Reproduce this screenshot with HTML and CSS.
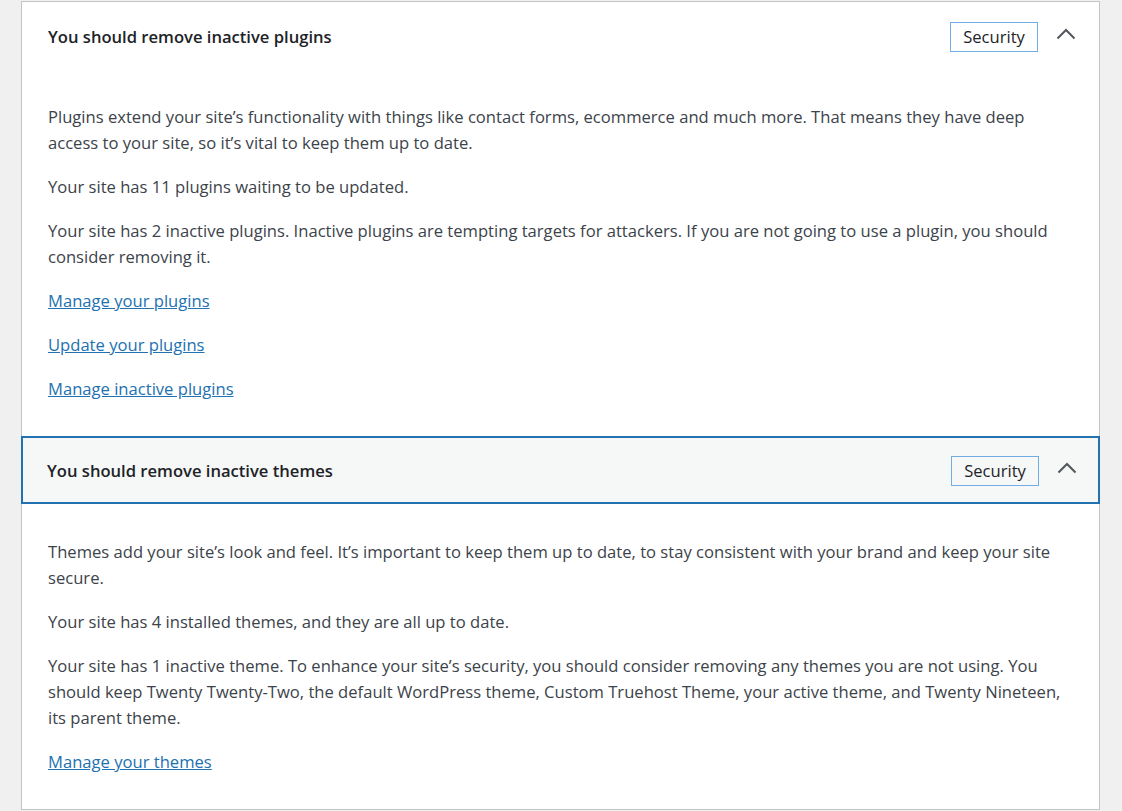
FILE: index.html
```html
<!DOCTYPE html>
<html lang="en">
<head>
<meta charset="utf-8">
<title>Site Health</title>
<link rel="stylesheet" href="styles.css">
</head>
<body>
<div class="accordion">
  <section class="item">
    <div class="trigger">
      <h3 class="title">You should remove inactive plugins</h3>
      <span class="badge">Security</span>
      <svg class="chev" width="20" height="12" viewBox="0 0 20 12"><path d="M1.5 10.5 L10 2 L18.5 10.5" fill="none" stroke="#50575e" stroke-width="2"/></svg>
    </div>
    <div class="panel">
      <p>Plugins extend your site’s functionality with things like contact forms, ecommerce and much more. That means they have deep access to your site, so it’s vital to keep them up to date.</p>
      <p>Your site has 11 plugins waiting to be updated.</p>
      <p>Your site has 2 inactive plugins. Inactive plugins are tempting targets for attackers. If you are not going to use a plugin, you should consider removing it.</p>
      <p><a href="#">Manage your plugins</a></p>
      <p><a href="#">Update your plugins</a></p>
      <p><a href="#">Manage inactive plugins</a></p>
    </div>
  </section>
  <section class="item">
    <div class="trigger focused">
      <h3 class="title">You should remove inactive themes</h3>
      <span class="badge">Security</span>
      <svg class="chev" width="20" height="12" viewBox="0 0 20 12"><path d="M1.5 10.5 L10 2 L18.5 10.5" fill="none" stroke="#50575e" stroke-width="2"/></svg>
    </div>
    <div class="panel">
      <p>Themes add your site’s look and feel. It’s important to keep them up to date, to stay consistent with your brand and keep your site secure.</p>
      <p>Your site has 4 installed themes, and they are all up to date.</p>
      <p>Your site has 1 inactive theme. To enhance your site’s security, you should consider removing any themes you are not using. You should keep Twenty Twenty-Two, the default WordPress theme, Custom Truehost Theme, your active theme, and Twenty Nineteen, its parent theme.</p>
      <p><a href="#">Manage your themes</a></p>
    </div>
  </section>
</div>
</body>
</html>
```
FILE: styles.css
```css
html, body {
  margin: 0;
  padding: 0;
  background: #f0f0f1;
}
body {
  padding-top: 1px;
  font-family: "Segoe UI", "Open Sans", "Noto Sans", sans-serif;
  color: #3c434a;
}
.accordion {
  margin-left: 21px;
  width: 1077px;
  background: #fff;
  border: 1px solid #c3c4c7;
}
.trigger {
  display: flex;
  align-items: center;
  height: 64px;
  padding: 0 21px 0 24px;
  border: 2px solid transparent;
}
.trigger.focused {
  height: 64px;
  margin: 0 -1px;
  background: #f6f7f7;
  border-color: #2271b1;
}
.title {
  flex: 1;
  margin: 1px 0 0;
  font-size: 16.6px;
  font-weight: 600;
  color: #1d2327;
}
.badge {
  display: inline-flex;
  align-items: center;
  justify-content: center;
  box-sizing: border-box;
  width: 88px;
  height: 30px;
  border: 1px solid #72aee6;
  font-size: 16.6px;
  color: #1d2327;
  margin-top: 1px;
}
.chev {
  margin-left: 18px;
  margin-top: -4px;
}
.panel {
  padding: 16px 26px 16px 26px;
}
.focused + .panel {
  padding-top: 17px;
}
.panel p {
  margin: 18px 0;
  font-size: 16.6px;
  line-height: 26px;
}
.panel a {
  color: #2271b1;
  text-decoration: underline;
}
```
